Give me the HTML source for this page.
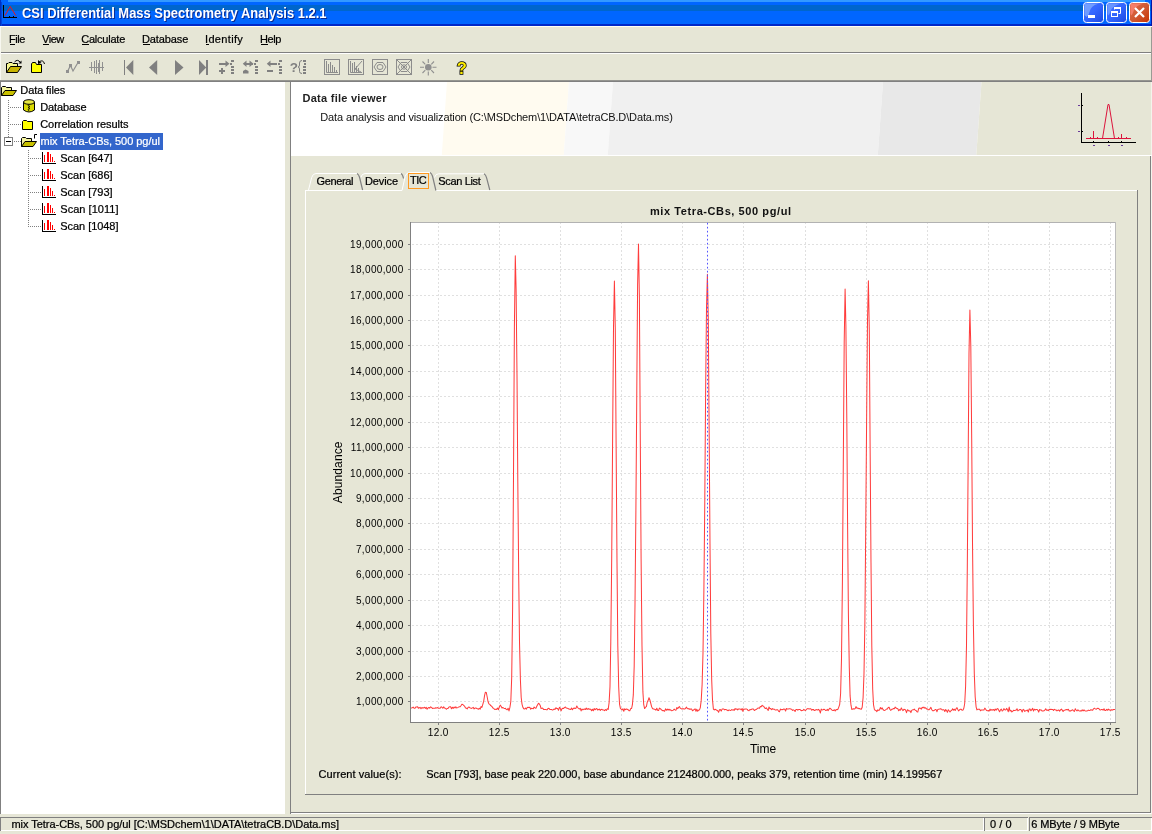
<!DOCTYPE html>
<html><head><meta charset="utf-8"><title>CSI Differential Mass Spectrometry Analysis 1.2.1</title>
<style>
html,body{margin:0;padding:0;background:#E6E6D6;overflow:hidden}
svg{display:block;font-family:"Liberation Sans",sans-serif;will-change:transform}
rect{shape-rendering:crispEdges}
text{white-space:pre}
.ui text, text.ui{stroke:#000;stroke-width:0.22px}
text.ui[fill='#fff']{stroke:#fff}
</style></head><body>
<svg width="1152" height="834" viewBox="0 0 1152 834">
<rect x="0" y="0" width="1152" height="834" fill="#E6E6D6" />
<rect x="0" y="0" width="1152" height="2" fill="#0066FF" />
<rect x="8" y="0" width="1137" height="2" fill="#3399FF" />
<rect x="0" y="2" width="1152" height="3" fill="#0066FF" />
<rect x="0" y="5" width="1152" height="6" fill="#0066CC" />
<rect x="0" y="11" width="1152" height="13" fill="#0066FF" />
<rect x="0" y="24" width="1152" height="2" fill="#0028C8" />
<rect x="0" y="0" width="1" height="26" fill="#0030C0" />
<rect x="1" y="2" width="1" height="24" fill="#0044DD" />
<rect x="1151" y="0" width="1" height="26" fill="#0018A8" />
<rect x="0" y="26" width="1152" height="1" fill="#FFFFF4" />
<g id="titleicons">
<!-- app icon -->
<rect x="3" y="5" width="1" height="13" fill="#000"/>
<rect x="3" y="17" width="14" height="1" fill="#000"/>
<path d="M5 15.5 L10.2 6.5 L15.8 15.5" fill="none" stroke="#e81818" stroke-width="1"/>
<rect x="9" y="16" width="1" height="1" fill="#000"/><rect x="13" y="16" width="1" height="1" fill="#000"/>
<!-- caption buttons -->
<defs>
<linearGradient id="gb" x1="0" y1="0" x2="1" y2="1"><stop offset="0" stop-color="#4a78ff"/><stop offset="0.5" stop-color="#3366ff"/><stop offset="1" stop-color="#1c48e0"/></linearGradient>
<linearGradient id="gr" x1="0" y1="0" x2="1" y2="1"><stop offset="0" stop-color="#e06848"/><stop offset="0.5" stop-color="#d05a34"/><stop offset="1" stop-color="#c83200"/></linearGradient>
</defs>
<rect x="1083.5" y="2.5" width="20" height="20" rx="3" fill="url(#gb)" stroke="#fff" stroke-width="1" style="shape-rendering:auto"/>
<rect x="1106.5" y="2.5" width="20" height="20" rx="3" fill="url(#gb)" stroke="#fff" stroke-width="1" style="shape-rendering:auto"/>
<rect x="1129.5" y="2.5" width="20" height="20" rx="3" fill="url(#gr)" stroke="#fff" stroke-width="1" style="shape-rendering:auto"/>
<path d="M1084.5 5 Q1084.5 3.500 1086 3.500 H1099 Q1090.500 5.500 1089.300 12.500 Q1088.800 15.500 1086.500 17 L1084.500 15 Z" fill="#7aa6ff" opacity="0.85"/>
<path d="M1107.500 5 Q1107.500 3.500 1109 3.500 H1121 Q1113 5.500 1111 10 Q1110 13.500 1108.500 15.500 L1107.500 14 Z" fill="#7aa6ff" opacity="0.7"/>
<path d="M1130.500 5 Q1130.500 3.500 1132 3.500 H1143 Q1136 5.500 1134 10 Q1133 13.500 1131.500 15.500 L1130.500 14 Z" fill="#ff8a7a" opacity="0.7"/>
<rect x="1088" y="15" width="7" height="3" fill="#fff"/>
<rect x="1111.5" y="11.5" width="6" height="5" fill="none" stroke="#fff" stroke-width="1"/><rect x="1111" y="11" width="7" height="2" fill="#fff"/>
<path d="M1114.5 9.500 V7.500 H1120.500 V13.500 H1118.500" fill="none" stroke="#fff" stroke-width="1"/><rect x="1114" y="7" width="7" height="2" fill="#fff"/>
<path d="M1135 8 L1144 17 M1144 8 L1135 17" stroke="#fff" stroke-width="2.2" fill="none"/>
</g>

<text x="23" y="19" font-size="14" font-weight="bold" fill="#0a2a90" textLength="304.5" lengthAdjust="spacingAndGlyphs">CSI Differential Mass Spectrometry Analysis 1.2.1</text>
<text x="22" y="18" font-size="14" font-weight="bold" fill="#fff" textLength="304.5" lengthAdjust="spacingAndGlyphs">CSI Differential Mass Spectrometry Analysis 1.2.1</text>
<text x="9.0" y="43" font-size="11" font-weight="normal" fill="#000" text-anchor="start" textLength="16.3" lengthAdjust="spacing" class="ui">File</text>
<text x="42.0" y="43" font-size="11" font-weight="normal" fill="#000" text-anchor="start" textLength="22.3" lengthAdjust="spacing" class="ui">View</text>
<text x="81.25" y="43" font-size="11" font-weight="normal" fill="#000" text-anchor="start" textLength="44.0" lengthAdjust="spacing" class="ui">Calculate</text>
<text x="142.0" y="43" font-size="11" font-weight="normal" fill="#000" text-anchor="start" textLength="46.3" lengthAdjust="spacing" class="ui">Database</text>
<text x="205.0" y="43" font-size="11" font-weight="normal" fill="#000" text-anchor="start" textLength="37.8" lengthAdjust="spacing" class="ui">Identify</text>
<text x="260.0" y="43" font-size="11" font-weight="normal" fill="#000" text-anchor="start" textLength="21.3" lengthAdjust="spacing" class="ui">Help</text>
<rect x="10" y="44" width="5" height="1" fill="#000" />
<rect x="43" y="44" width="6" height="1" fill="#000" />
<rect x="82" y="44" width="7" height="1" fill="#000" />
<rect x="143" y="44" width="7" height="1" fill="#000" />
<rect x="206" y="44" width="3" height="1" fill="#000" />
<rect x="261" y="44" width="7" height="1" fill="#000" />
<rect x="0" y="52" width="1152" height="1" fill="#808080" />
<rect x="0" y="53" width="1152" height="1" fill="#FFFFFF" />
<rect x="1151" y="27" width="1" height="55" fill="#9a9a94" />
<rect x="0" y="27" width="1" height="53" fill="#f8f8f0" />
<g id="toolbar">
<!-- open folder w/ arrow -->
<path d="M6.5 72.5 V63.5 H8 L9 62.5 H12 L13 63.5 H17.5 V66.5" fill="#f6f690" stroke="#000" stroke-width="1"/>
<path d="M6.5 72.5 L10.5 66.5 H21.5 L17.5 72.5 Z" fill="#c8b400" stroke="#000" stroke-width="1"/>
<path d="M14.5 62 Q17.5 58.5 20.5 62.5" fill="none" stroke="#000" stroke-width="1"/><path d="M21.5 60.5 V63.5 H18.5 Z" fill="#000"/>
<!-- closed folder w/ arrow -->
<path d="M31.5 72.500 V64 L32.500 62.500 H35.500 L36.500 64.500 H41.500 V72.500 Z" fill="#ffff00" stroke="#000" stroke-width="1"/>

<path d="M44.5 64 Q43.5 59.5 39.5 61.5" fill="none" stroke="#000" stroke-width="1"/><path d="M38 60 L38 64 L41.5 63 Z" fill="#000"/>
<!-- zigzag -->
<path d="M67.5 71.5 L70.5 65.5 L73 71 L78 62.500" fill="none" stroke="#909090" stroke-width="1.200"/>
<rect x="66" y="70" width="3" height="3" fill="#909090"/><rect x="69" y="64" width="3" height="3" fill="#909090"/><rect x="77" y="61" width="3" height="3" fill="#909090"/>
<!-- barcode -->
<g fill="#909090"><rect x="89" y="67" width="15" height="1"/><rect x="91" y="62" width="1" height="9"/><rect x="94" y="61" width="1" height="12"/><rect x="96" y="60" width="1" height="14"/><rect x="97.5" y="63" width="1" height="9" /><rect x="99" y="60" width="1" height="14"/><rect x="102" y="62" width="1" height="9"/></g>
<!-- nav arrows -->
<g fill="#808080" style="shape-rendering:auto">
<rect x="124" y="60" width="1.300" height="15"/><path d="M126 67.500 L133.300 60 V75 Z"/>
<path d="M149 67.500 L157.200 60 V75 Z"/>
<path d="M183.500 67.500 L175 60 V75 Z"/>
<path d="M206.200 67.500 L199 60 V75 Z"/><rect x="206.200" y="60" width="1.300" height="15"/>
</g>
<!-- arrow+ dotted -->
<g fill="#808080">
<rect x="219" y="63" width="9" height="2"/><path d="M225.500 60.500 L229.500 63.800 L225.500 67 Z" style="shape-rendering:auto"/>
<rect x="219" y="70" width="6" height="2"/><rect x="221" y="68" width="2" height="6"/>
<rect x="231" y="60" width="3" height="2"/><rect x="230" y="63" width="2" height="2"/><rect x="231" y="66" width="3" height="2"/><rect x="231" y="69" width="3" height="2"/><rect x="231" y="72" width="3" height="2"/>
<!-- arrows both + house -->
<rect x="244" y="63" width="9" height="2"/><path d="M246.500 60.500 L242.800 63.800 L246.500 67 Z" style="shape-rendering:auto"/><path d="M249.500 60.500 L253.500 63.800 L249.500 67 Z" style="shape-rendering:auto"/>
<path d="M243 73.500 V71 L245.500 69.500 L248.500 71 V73.500 Z" style="shape-rendering:auto"/>
<rect x="255" y="60" width="3" height="2"/><rect x="254" y="63" width="2" height="2"/><rect x="255" y="66" width="3" height="2"/><rect x="255" y="69" width="3" height="2"/><rect x="255" y="72" width="3" height="2"/>
<!-- arrow left + minus -->
<rect x="268" y="63" width="9" height="2"/><path d="M270.500 60.500 L266.800 63.800 L270.500 67 Z" style="shape-rendering:auto"/>
<rect x="267" y="70" width="6" height="2"/>
<rect x="279" y="60" width="3" height="2"/><rect x="278" y="63" width="2" height="2"/><rect x="279" y="66" width="3" height="2"/><rect x="279" y="69" width="3" height="2"/><rect x="279" y="72" width="3" height="2"/>
<!-- ?{ dotted -->
<rect x="303" y="60" width="3" height="2"/><rect x="304" y="63" width="2" height="2"/><rect x="303" y="66" width="3" height="2"/><rect x="303" y="69" width="3" height="2"/><rect x="303" y="72" width="3" height="2"/>
</g>
<text x="289.800" y="72.200" font-size="13.500" font-weight="bold" fill="#808080">?</text>
<path d="M302 60.500 Q299.500 60.500 299.500 63 V65 Q299.500 67 298 67 Q299.500 67 299.500 69 V71.500 Q299.500 73.500 302 73.500" fill="none" stroke="#808080" stroke-width="1"/>
<!-- boxed icons -->
<g fill="none" stroke="#8c8c8c" stroke-width="1">
<rect x="324.500" y="59.500" width="15" height="15"/><rect x="348.500" y="59.500" width="15" height="15"/><rect x="372.500" y="59.500" width="15" height="15"/><rect x="396.500" y="59.500" width="15" height="15"/>
<path d="M326.500 61 V72.500 H338"/><path d="M328.500 72 V64 M330.500 72 V62 M332.500 72 V65 M334.500 72 V67 M336.500 72 V70"/>
<path d="M350.500 61 V72.500 H362"/><path d="M352.500 72 V63 M354.500 72 V62 M356.500 72 V66 M358.500 72 V68"/><path d="M362 61 L355 69 L361 72" style="shape-rendering:auto"/>
<path d="M374 67 L377 62.500 H383 L386 67 L383 71.500 H377 Z" style="shape-rendering:auto"/><ellipse cx="380" cy="67" rx="3" ry="2.500" style="shape-rendering:auto"/>
<path d="M397 60 L411 74 M411 60 L397 74" style="shape-rendering:auto"/><path d="M398 67 L401 62.500 H407 L410 67 L407 71.500 H401 Z" style="shape-rendering:auto"/><ellipse cx="404" cy="67" rx="2.500" ry="2.200" style="shape-rendering:auto"/>
</g>
<!-- sun -->
<circle cx="428.300" cy="67.200" r="3.300" fill="#909090"/>
<path d="M428.300 59 V63 M428.300 71.500 V75.500 M420 67.200 H424 M432.500 67.200 H436.500 M422.500 61.500 L425.300 64.300 M431.300 70.200 L434 73 M434 61.500 L431.300 64.300 M425.300 70.200 L422.500 73" stroke="#909090" stroke-width="1.100" fill="none"/>
<!-- yellow ? -->
<text x="456.800" y="73.700" font-size="16.5" font-weight="bold" fill="#ffee00" stroke="#000" stroke-width="1.500" paint-order="stroke" style="paint-order:stroke">?</text>
</g>

<rect x="0" y="80" width="1152" height="1" fill="#959590" />
<rect x="0" y="81" width="1152" height="1" fill="#808080" />
<rect x="1" y="82" width="284" height="732" fill="#fff" />
<rect x="0" y="82" width="1" height="732" fill="#808080" />
<g id="tree">
<defs><pattern id="dv" width="1" height="2" patternUnits="userSpaceOnUse"><rect x="0" y="0" width="1" height="1" fill="#808080"/></pattern><pattern id="dh" width="2" height="1" patternUnits="userSpaceOnUse"><rect x="0" y="0" width="1" height="1" fill="#808080"/></pattern></defs>
<rect x="8" y="100" width="1" height="37" fill="url(#dv)"/>
<rect x="10" y="107" width="12" height="1" fill="url(#dh)"/>
<rect x="10" y="124" width="12" height="1" fill="url(#dh)"/>
<rect x="14" y="141" width="8" height="1" fill="url(#dh)"/>
<rect x="28" y="150" width="1" height="77" fill="url(#dv)"/>
<rect x="30" y="158" width="12" height="1" fill="url(#dh)"/>
<rect x="30" y="175" width="12" height="1" fill="url(#dh)"/>
<rect x="30" y="192" width="12" height="1" fill="url(#dh)"/>
<rect x="30" y="209" width="12" height="1" fill="url(#dh)"/>
<rect x="30" y="226" width="12" height="1" fill="url(#dh)"/>
<path d="M1.5 95.5 V87.5 L2.5 86.5 H5.5 L6.5 87.5 H11.5 V90.5" fill="#f4f4a0" stroke="#000" stroke-width="1"/>
<path d="M1.5 95.5 L5 90.5 H16.5 L13 95.5 Z" fill="#c8c000" stroke="#000" stroke-width="1"/>
<path d="M21.5 146.5 V138.5 L22.5 137.5 H25.5 L26.5 138.5 H31.5 V141.5" fill="#f4f4a0" stroke="#000" stroke-width="1"/>
<path d="M21.5 146.5 L25 141.5 H36.5 L33 146.5 Z" fill="#c8c000" stroke="#000" stroke-width="1"/>
<path d="M34.500 138.500 V134.500 H37" fill="none" stroke="#000" stroke-width="1"/>
<path d="M23.500 102 V110 Q29 114 34.500 110 V102" fill="#d8d800" stroke="#000" stroke-width="1"/>
<ellipse cx="29" cy="102" rx="5.500" ry="2.300" fill="#e8e840" stroke="#000" stroke-width="1"/>
<path d="M29 104.500 L28 105.500 L30 106.500 L28 107.500 L30 108.500 L28 109.500 L29 111" fill="none" stroke="#000" stroke-width="0.800"/>
<path d="M22.500 129.500 V121.500 L23.500 120.500 H26.500 L27.500 121.500 H32.500 V129.500 Z" fill="#ffff00" stroke="#000" stroke-width="1"/>
<rect x="4.500" y="137.500" width="8" height="8" fill="#fff" stroke="#808080" stroke-width="1"/><rect x="6" y="141" width="5" height="1" fill="#000"/>
<rect x="40" y="133" width="123" height="17" fill="#3366CC"/>
<rect x="42" y="152" width="1" height="12" fill="#000"/><rect x="42" y="163" width="14" height="1" fill="#000"/>
<g fill="#ff0000"><rect x="44" y="155" width="1" height="7"/><rect x="47" y="152" width="2" height="10"/><rect x="50" y="154" width="1" height="8"/><rect x="52" y="157" width="1" height="5"/><rect x="54" y="161" width="1" height="1"/></g>
<rect x="42" y="169" width="1" height="12" fill="#000"/><rect x="42" y="180" width="14" height="1" fill="#000"/>
<g fill="#ff0000"><rect x="44" y="172" width="1" height="7"/><rect x="47" y="169" width="2" height="10"/><rect x="50" y="171" width="1" height="8"/><rect x="52" y="174" width="1" height="5"/><rect x="54" y="178" width="1" height="1"/></g>
<rect x="42" y="186" width="1" height="12" fill="#000"/><rect x="42" y="197" width="14" height="1" fill="#000"/>
<g fill="#ff0000"><rect x="44" y="189" width="1" height="7"/><rect x="47" y="186" width="2" height="10"/><rect x="50" y="188" width="1" height="8"/><rect x="52" y="191" width="1" height="5"/><rect x="54" y="195" width="1" height="1"/></g>
<rect x="42" y="203" width="1" height="12" fill="#000"/><rect x="42" y="214" width="14" height="1" fill="#000"/>
<g fill="#ff0000"><rect x="44" y="206" width="1" height="7"/><rect x="47" y="203" width="2" height="10"/><rect x="50" y="205" width="1" height="8"/><rect x="52" y="208" width="1" height="5"/><rect x="54" y="212" width="1" height="1"/></g>
<rect x="42" y="220" width="1" height="12" fill="#000"/><rect x="42" y="231" width="14" height="1" fill="#000"/>
<g fill="#ff0000"><rect x="44" y="223" width="1" height="7"/><rect x="47" y="220" width="2" height="10"/><rect x="50" y="222" width="1" height="8"/><rect x="52" y="225" width="1" height="5"/><rect x="54" y="229" width="1" height="1"/></g>
<text class="ui" x="20.3" y="94" font-size="11" fill="#000" textLength="45" lengthAdjust="spacing">Data files</text>
<text class="ui" x="40.2" y="111" font-size="11" fill="#000" textLength="46.3" lengthAdjust="spacing">Database</text>
<text class="ui" x="40.2" y="128" font-size="11" fill="#000" textLength="88.3" lengthAdjust="spacing">Correlation results</text>
<text class="ui" x="40.5" y="145" font-size="11" fill="#fff" textLength="119.5" lengthAdjust="spacing">mix Tetra-CBs, 500 pg/ul</text>
<text class="ui" x="60.3" y="162" font-size="11" fill="#000" textLength="52.3" lengthAdjust="spacing">Scan [647]</text>
<text class="ui" x="60.3" y="179" font-size="11" fill="#000" textLength="52.3" lengthAdjust="spacing">Scan [686]</text>
<text class="ui" x="60.3" y="196" font-size="11" fill="#000" textLength="52.3" lengthAdjust="spacing">Scan [793]</text>
<text class="ui" x="60.3" y="213" font-size="11" fill="#000" textLength="58.2" lengthAdjust="spacing">Scan [1011]</text>
<text class="ui" x="60.3" y="230" font-size="11" fill="#000" textLength="58.2" lengthAdjust="spacing">Scan [1048]</text>
</g>
<rect x="290" y="82" width="1" height="732" fill="#808080" />
<rect x="290" y="812" width="861" height="1" fill="#808080" />
<rect x="291" y="813" width="860" height="1" fill="#fff" />
<rect x="1150" y="155" width="1" height="658" fill="#808080" />
<rect x="1151" y="82" width="1" height="732" fill="#f4f4ec" />
<g>
<rect x="291" y="82" width="860" height="73" fill="#fff" />
<polygon points="447,82 569,82 563.8,155 441.8,155" fill="#FFFBF0" shape-rendering="auto"/>
<polygon points="569,82 613,82 607.8,155 563.8,155" fill="#F8F8F8" shape-rendering="auto"/>
<polygon points="613,82 883,82 877.8,155 607.8,155" fill="#F0F0F0" shape-rendering="auto"/>
<polygon points="883,82 981.5,82 976.3,155 877.8,155" fill="#E8E8E8" shape-rendering="auto"/>
<polygon points="981.5,82 1151,82 1151,155 976.3,155" fill="#E6E6D6"/>
</g>
<text x="302.5" y="102" font-size="11" font-weight="bold" fill="#222" text-anchor="start" textLength="84" lengthAdjust="spacing" >Data file viewer</text>
<text x="320.3" y="120.5" font-size="11" font-weight="normal" fill="#111" text-anchor="start" textLength="352.5" lengthAdjust="spacing" >Data analysis and visualization (C:\MSDchem\1\DATA\tetraCB.D\Data.ms)</text>
<rect x="291" y="155" width="861" height="1" fill="#fff" />
<g id="hicon">
<rect x="1081" y="93" width="1" height="50" fill="#000"/><rect x="1081" y="142" width="55" height="1" fill="#000"/>
<rect x="1093" y="141" width="1" height="1" fill="#000"/><rect x="1093" y="145" width="2" height="1" fill="#6a3a9a"/>
<rect x="1108" y="141" width="1" height="1" fill="#000"/><rect x="1108" y="145" width="2" height="1" fill="#6a3a9a"/>
<rect x="1121" y="141" width="1" height="1" fill="#000"/><rect x="1121" y="145" width="2" height="1" fill="#6a3a9a"/>
<rect x="1078" y="105" width="2" height="1" fill="#6a3a9a"/><rect x="1082" y="105" width="1" height="1" fill="#000"/>
<rect x="1078" y="131" width="2" height="1" fill="#6a3a9a"/><rect x="1082" y="131" width="1" height="1" fill="#000"/>
<path d="M1086 138.500 H1102.500 L1108 104.500 H1109 L1114.500 138.500 H1131 M1102 138.500 H1115" fill="none" stroke="#dc143c" stroke-width="1" stroke-linejoin="round"/>
<g fill="#dc143c"><rect x="1093" y="131" width="1" height="7"/><rect x="1121" y="134" width="1" height="4"/><rect x="1090" y="137" width="1" height="1"/><rect x="1097" y="137" width="1" height="1"/><rect x="1118" y="137" width="1" height="1"/><rect x="1126" y="137" width="1" height="1"/></g>
</g>
<g id="tabs" fill="none" stroke-width="1">
<rect x="305" y="190" width="97" height="1" fill="#fff"/><rect x="436" y="190" width="702" height="1" fill="#fff"/>
<rect x="305" y="190" width="1" height="605" fill="#fff"/>
<rect x="1137" y="190" width="1" height="605" fill="#808080"/><rect x="305" y="794" width="833" height="1" fill="#808080"/>
<path d="M308.500 190 L311.700 177.500 Q312.800 173.500 316 173.500 H357" stroke="#fff"/>
<path d="M360.800 177.500 Q361.900 173.500 365 173.500 H401" stroke="#fff"/>
<path d="M357 173.500 Q358.800 174.500 359.600 177.500 L362.600 190" stroke="#808080" stroke-width="1.2"/>
<path d="M401 173.500 Q402.800 174.500 403.500 178.500" stroke="#808080" stroke-width="1.2"/>
<path d="M434.500 177.500 Q435.600 173.800 438.500 173.800 H484" stroke="#fff"/>
<path d="M484 173.800 Q485.800 174.800 486.600 177.800 L489.800 190" stroke="#808080" stroke-width="1.2"/>
<path d="M402 190.500 L405.200 176.500 Q406.300 172.500 409.500 172.500 H430" stroke="#fff"/>
<path d="M430 172.500 Q431.800 173.500 432.600 176.500 L435.900 190.500" stroke="#808080" stroke-width="1.2"/>
<rect x="408.500" y="173.500" width="20" height="15" stroke="#ff9920" style="shape-rendering:auto"/>
</g>
<text class="ui" x="316.5" y="185" font-size="11" fill="#000" textLength="37" lengthAdjust="spacing">General</text>
<text class="ui" x="365" y="185" font-size="11" fill="#000" textLength="33" lengthAdjust="spacing">Device</text>
<text class="ui" x="410" y="184" font-size="11" fill="#000" textLength="16.8" lengthAdjust="spacing">TIC</text>
<text class="ui" x="438.3" y="185" font-size="11" fill="#000" textLength="42.5" lengthAdjust="spacing">Scan List</text>
<g id="chart">
<text x="720.5" y="215" font-size="11" font-weight="bold" fill="#111" text-anchor="middle" textLength="141" lengthAdjust="spacing" >mix Tetra-CBs, 500 pg/ul</text>
<rect x="411" y="223" width="704" height="499" fill="#fff" />
<g stroke="#e0e0e0" stroke-width="1" stroke-dasharray="2 2" shape-rendering="crispEdges">
<line x1="438.5" y1="223" x2="438.5" y2="722" stroke-dashoffset="1"/>
<line x1="499.5" y1="223" x2="499.5" y2="722" stroke-dashoffset="1"/>
<line x1="560.5" y1="223" x2="560.5" y2="722" stroke-dashoffset="1"/>
<line x1="621.5" y1="223" x2="621.5" y2="722" stroke-dashoffset="1"/>
<line x1="682.5" y1="223" x2="682.5" y2="722" stroke-dashoffset="1"/>
<line x1="743.5" y1="223" x2="743.5" y2="722" stroke-dashoffset="1"/>
<line x1="805.5" y1="223" x2="805.5" y2="722" stroke-dashoffset="1"/>
<line x1="866.5" y1="223" x2="866.5" y2="722" stroke-dashoffset="1"/>
<line x1="927.5" y1="223" x2="927.5" y2="722" stroke-dashoffset="1"/>
<line x1="988.5" y1="223" x2="988.5" y2="722" stroke-dashoffset="1"/>
<line x1="1049.5" y1="223" x2="1049.5" y2="722" stroke-dashoffset="1"/>
<line x1="1110.5" y1="223" x2="1110.5" y2="722" stroke-dashoffset="1"/>
<line x1="411" y1="701.5" x2="1115" y2="701.5" stroke-dashoffset="3"/>
<line x1="411" y1="676.5" x2="1115" y2="676.5" stroke-dashoffset="3"/>
<line x1="411" y1="651.5" x2="1115" y2="651.5" stroke-dashoffset="3"/>
<line x1="411" y1="625.5" x2="1115" y2="625.5" stroke-dashoffset="3"/>
<line x1="411" y1="600.5" x2="1115" y2="600.5" stroke-dashoffset="3"/>
<line x1="411" y1="574.5" x2="1115" y2="574.5" stroke-dashoffset="3"/>
<line x1="411" y1="549.5" x2="1115" y2="549.5" stroke-dashoffset="3"/>
<line x1="411" y1="523.5" x2="1115" y2="523.5" stroke-dashoffset="3"/>
<line x1="411" y1="498.5" x2="1115" y2="498.5" stroke-dashoffset="3"/>
<line x1="411" y1="473.5" x2="1115" y2="473.5" stroke-dashoffset="3"/>
<line x1="411" y1="447.5" x2="1115" y2="447.5" stroke-dashoffset="3"/>
<line x1="411" y1="422.5" x2="1115" y2="422.5" stroke-dashoffset="3"/>
<line x1="411" y1="396.5" x2="1115" y2="396.5" stroke-dashoffset="3"/>
<line x1="411" y1="371.5" x2="1115" y2="371.5" stroke-dashoffset="3"/>
<line x1="411" y1="345.5" x2="1115" y2="345.5" stroke-dashoffset="3"/>
<line x1="411" y1="320.5" x2="1115" y2="320.5" stroke-dashoffset="3"/>
<line x1="411" y1="295.5" x2="1115" y2="295.5" stroke-dashoffset="3"/>
<line x1="411" y1="269.5" x2="1115" y2="269.5" stroke-dashoffset="3"/>
<line x1="411" y1="244.5" x2="1115" y2="244.5" stroke-dashoffset="3"/>
</g>
<rect x="410" y="222" width="706" height="1" fill="#b2b2b2" />
<rect x="1115" y="222" width="1" height="501" fill="#bcbcbc" />
<rect x="410" y="222" width="1" height="501" fill="#808080" />
<rect x="410" y="722" width="706" height="1" fill="#808080" />
<rect x="408" y="701" width="2" height="1" fill="#808080" />
<text x="403.6" y="705.1" font-size="10" font-weight="normal" fill="#000" text-anchor="end" letter-spacing="0.35">1,000,000</text>
<rect x="408" y="676" width="2" height="1" fill="#808080" />
<text x="403.6" y="680.1" font-size="10" font-weight="normal" fill="#000" text-anchor="end" letter-spacing="0.35">2,000,000</text>
<rect x="408" y="651" width="2" height="1" fill="#808080" />
<text x="403.6" y="655.1" font-size="10" font-weight="normal" fill="#000" text-anchor="end" letter-spacing="0.35">3,000,000</text>
<rect x="408" y="625" width="2" height="1" fill="#808080" />
<text x="403.6" y="629.1" font-size="10" font-weight="normal" fill="#000" text-anchor="end" letter-spacing="0.35">4,000,000</text>
<rect x="408" y="600" width="2" height="1" fill="#808080" />
<text x="403.6" y="604.1" font-size="10" font-weight="normal" fill="#000" text-anchor="end" letter-spacing="0.35">5,000,000</text>
<rect x="408" y="574" width="2" height="1" fill="#808080" />
<text x="403.6" y="578.1" font-size="10" font-weight="normal" fill="#000" text-anchor="end" letter-spacing="0.35">6,000,000</text>
<rect x="408" y="549" width="2" height="1" fill="#808080" />
<text x="403.6" y="553.1" font-size="10" font-weight="normal" fill="#000" text-anchor="end" letter-spacing="0.35">7,000,000</text>
<rect x="408" y="523" width="2" height="1" fill="#808080" />
<text x="403.6" y="527.1" font-size="10" font-weight="normal" fill="#000" text-anchor="end" letter-spacing="0.35">8,000,000</text>
<rect x="408" y="498" width="2" height="1" fill="#808080" />
<text x="403.6" y="502.1" font-size="10" font-weight="normal" fill="#000" text-anchor="end" letter-spacing="0.35">9,000,000</text>
<rect x="408" y="473" width="2" height="1" fill="#808080" />
<text x="403.6" y="477.1" font-size="10" font-weight="normal" fill="#000" text-anchor="end" letter-spacing="0.35">10,000,000</text>
<rect x="408" y="447" width="2" height="1" fill="#808080" />
<text x="403.6" y="451.1" font-size="10" font-weight="normal" fill="#000" text-anchor="end" letter-spacing="0.35">11,000,000</text>
<rect x="408" y="422" width="2" height="1" fill="#808080" />
<text x="403.6" y="426.1" font-size="10" font-weight="normal" fill="#000" text-anchor="end" letter-spacing="0.35">12,000,000</text>
<rect x="408" y="396" width="2" height="1" fill="#808080" />
<text x="403.6" y="400.1" font-size="10" font-weight="normal" fill="#000" text-anchor="end" letter-spacing="0.35">13,000,000</text>
<rect x="408" y="371" width="2" height="1" fill="#808080" />
<text x="403.6" y="375.1" font-size="10" font-weight="normal" fill="#000" text-anchor="end" letter-spacing="0.35">14,000,000</text>
<rect x="408" y="345" width="2" height="1" fill="#808080" />
<text x="403.6" y="349.1" font-size="10" font-weight="normal" fill="#000" text-anchor="end" letter-spacing="0.35">15,000,000</text>
<rect x="408" y="320" width="2" height="1" fill="#808080" />
<text x="403.6" y="324.1" font-size="10" font-weight="normal" fill="#000" text-anchor="end" letter-spacing="0.35">16,000,000</text>
<rect x="408" y="295" width="2" height="1" fill="#808080" />
<text x="403.6" y="299.1" font-size="10" font-weight="normal" fill="#000" text-anchor="end" letter-spacing="0.35">17,000,000</text>
<rect x="408" y="269" width="2" height="1" fill="#808080" />
<text x="403.6" y="273.1" font-size="10" font-weight="normal" fill="#000" text-anchor="end" letter-spacing="0.35">18,000,000</text>
<rect x="408" y="244" width="2" height="1" fill="#808080" />
<text x="403.6" y="248.1" font-size="10" font-weight="normal" fill="#000" text-anchor="end" letter-spacing="0.35">19,000,000</text>
<rect x="438" y="723" width="1" height="2" fill="#808080" />
<text x="438.3" y="736.2" font-size="10" font-weight="normal" fill="#000" text-anchor="middle" letter-spacing="0.35">12.0</text>
<rect x="499" y="723" width="1" height="2" fill="#808080" />
<text x="499.3" y="736.2" font-size="10" font-weight="normal" fill="#000" text-anchor="middle" letter-spacing="0.35">12.5</text>
<rect x="560" y="723" width="1" height="2" fill="#808080" />
<text x="560.3" y="736.2" font-size="10" font-weight="normal" fill="#000" text-anchor="middle" letter-spacing="0.35">13.0</text>
<rect x="621" y="723" width="1" height="2" fill="#808080" />
<text x="621.3" y="736.2" font-size="10" font-weight="normal" fill="#000" text-anchor="middle" letter-spacing="0.35">13.5</text>
<rect x="682" y="723" width="1" height="2" fill="#808080" />
<text x="682.3" y="736.2" font-size="10" font-weight="normal" fill="#000" text-anchor="middle" letter-spacing="0.35">14.0</text>
<rect x="743" y="723" width="1" height="2" fill="#808080" />
<text x="743.3" y="736.2" font-size="10" font-weight="normal" fill="#000" text-anchor="middle" letter-spacing="0.35">14.5</text>
<rect x="805" y="723" width="1" height="2" fill="#808080" />
<text x="805.3" y="736.2" font-size="10" font-weight="normal" fill="#000" text-anchor="middle" letter-spacing="0.35">15.0</text>
<rect x="866" y="723" width="1" height="2" fill="#808080" />
<text x="866.3" y="736.2" font-size="10" font-weight="normal" fill="#000" text-anchor="middle" letter-spacing="0.35">15.5</text>
<rect x="927" y="723" width="1" height="2" fill="#808080" />
<text x="927.3" y="736.2" font-size="10" font-weight="normal" fill="#000" text-anchor="middle" letter-spacing="0.35">16.0</text>
<rect x="988" y="723" width="1" height="2" fill="#808080" />
<text x="988.3" y="736.2" font-size="10" font-weight="normal" fill="#000" text-anchor="middle" letter-spacing="0.35">16.5</text>
<rect x="1049" y="723" width="1" height="2" fill="#808080" />
<text x="1049.3" y="736.2" font-size="10" font-weight="normal" fill="#000" text-anchor="middle" letter-spacing="0.35">17.0</text>
<rect x="1110" y="723" width="1" height="2" fill="#808080" />
<text x="1110.3" y="736.2" font-size="10" font-weight="normal" fill="#000" text-anchor="middle" letter-spacing="0.35">17.5</text>
<text x="763" y="753" font-size="12" font-weight="normal" fill="#000" text-anchor="middle" >Time</text>
<text transform="translate(342.3,472.3) rotate(-90)" font-size="12" text-anchor="middle" fill="#000" letter-spacing="0.12">Abundance</text>
<clipPath id="pc"><rect x="411" y="223" width="704" height="499"/></clipPath>
<path d="M410.6 708.0 L411.5 707.9 L412.3 707.7 L413.2 707.1 L414.1 708.2 L415.0 708.3 L415.8 707.0 L416.7 706.9 L417.6 706.7 L418.4 708.3 L419.3 707.8 L420.2 707.4 L421.0 708.8 L421.9 707.5 L422.8 708.2 L423.7 707.8 L424.5 707.2 L425.4 708.4 L426.3 707.4 L427.1 709.2 L428.0 708.0 L428.9 707.4 L429.7 708.1 L430.6 706.8 L431.5 707.4 L432.4 708.4 L433.2 708.2 L434.1 708.2 L435.0 708.3 L435.8 707.8 L436.7 708.1 L437.6 707.5 L438.4 708.3 L439.3 708.3 L440.2 708.2 L441.1 706.8 L441.9 707.2 L442.8 708.3 L443.7 706.9 L444.5 708.1 L445.4 708.2 L446.3 709.3 L447.1 708.5 L448.0 708.6 L448.9 707.1 L449.8 706.7 L450.6 706.8 L451.5 708.8 L452.4 707.3 L453.2 708.4 L454.1 707.0 L455.0 708.0 L455.8 706.7 L456.7 708.0 L457.6 707.6 L458.5 707.1 L459.3 706.7 L460.2 706.7 L461.1 705.5 L461.9 704.2 L462.8 704.5 L463.7 705.4 L464.5 706.1 L465.4 707.7 L466.3 708.2 L467.2 708.9 L468.0 707.4 L468.9 707.0 L469.8 707.7 L470.6 708.1 L471.5 708.4 L472.4 707.9 L473.2 707.3 L474.1 708.9 L475.0 708.1 L475.9 708.0 L476.7 708.5 L477.6 708.8 L478.5 709.3 L479.3 708.2 L480.2 709.2 L481.1 706.5 L481.9 707.4 L482.8 704.3 L483.7 701.2 L484.6 695.4 L485.4 692.2 L486.3 692.4 L487.2 697.0 L488.0 701.5 L488.9 703.9 L489.8 704.4 L490.6 705.5 L491.5 706.2 L492.4 707.1 L493.3 708.4 L494.1 708.8 L495.0 709.6 L495.9 709.1 L496.7 709.4 L497.6 708.1 L498.5 709.7 L499.3 707.0 L500.2 705.1 L501.1 706.3 L502.0 708.0 L502.8 707.4 L503.7 708.1 L504.6 708.6 L505.4 708.2 L506.3 709.5 L507.2 709.7 L508.1 708.2 L509.0 710.9 L509.9 707.4 L510.8 701.7 L511.7 677.4 L512.6 609.2 L513.5 476.3 L514.4 326.7 L515.3 255.8 L516.1 289.0 L517.0 375.0 L517.8 481.5 L518.7 575.4 L519.5 642.0 L520.4 679.7 L521.2 697.5 L522.0 704.1 L522.9 707.3 L523.7 708.8 L524.6 709.0 L525.4 708.0 L526.3 709.2 L527.2 707.5 L528.1 707.2 L528.9 707.4 L529.8 707.3 L530.7 709.2 L531.5 708.2 L532.4 708.6 L533.3 708.8 L534.1 707.0 L535.0 707.9 L535.9 708.2 L536.8 706.2 L537.6 704.7 L538.5 703.3 L539.4 704.0 L540.2 705.5 L541.1 708.6 L542.0 708.1 L542.8 708.2 L543.7 709.6 L544.6 709.4 L545.5 709.4 L546.3 709.8 L547.2 709.7 L548.1 708.4 L548.9 708.2 L549.8 709.4 L550.7 709.6 L551.5 709.4 L552.4 710.1 L553.3 709.7 L554.2 709.0 L555.0 709.5 L555.9 707.7 L556.8 708.6 L557.6 708.5 L558.5 710.3 L559.4 707.3 L560.2 708.1 L561.1 710.8 L562.0 708.8 L562.9 708.3 L563.7 708.4 L564.6 707.4 L565.5 707.0 L566.3 708.1 L567.2 708.3 L568.1 708.5 L568.9 709.1 L569.8 709.3 L570.7 709.5 L571.6 708.0 L572.4 709.8 L573.3 708.5 L574.2 708.0 L575.0 708.5 L575.9 708.3 L576.8 706.0 L577.6 707.5 L578.5 708.4 L579.4 709.0 L580.3 708.4 L581.1 710.9 L582.0 709.0 L582.9 709.9 L583.7 709.2 L584.6 709.0 L585.5 709.5 L586.3 708.1 L587.2 709.5 L588.1 708.5 L589.0 709.3 L589.8 709.1 L590.7 709.2 L591.6 710.7 L592.4 709.2 L593.3 710.7 L594.2 708.5 L595.0 709.8 L595.9 709.0 L596.8 708.5 L597.7 710.1 L598.5 709.5 L599.4 709.1 L600.3 710.5 L601.1 709.4 L602.0 709.3 L602.9 710.1 L603.7 709.9 L604.6 710.6 L605.5 709.5 L606.4 710.4 L607.3 708.7 L608.2 709.4 L609.1 702.6 L610.0 686.5 L610.8 641.7 L611.7 558.8 L612.6 440.6 L613.5 327.8 L614.4 281.0 L615.3 329.3 L616.1 443.2 L617.0 562.2 L617.8 645.8 L618.7 686.9 L619.5 703.8 L620.4 708.4 L621.2 709.1 L622.1 710.0 L622.9 708.7 L623.8 711.3 L624.6 708.8 L625.5 709.7 L626.4 708.9 L627.2 709.2 L628.1 709.7 L629.0 710.7 L629.8 710.7 L630.7 708.6 L631.6 708.5 L632.4 704.7 L633.3 694.9 L634.2 665.7 L635.0 604.2 L635.9 510.2 L636.8 390.7 L637.6 285.1 L638.5 244.0 L639.4 297.8 L640.2 426.1 L641.1 558.9 L642.0 646.1 L642.9 691.9 L643.7 704.3 L644.6 708.6 L645.5 707.2 L646.4 706.6 L647.2 702.3 L648.1 700.6 L649.0 697.7 L649.9 700.0 L650.7 703.0 L651.6 706.6 L652.5 708.5 L653.3 709.0 L654.2 709.1 L655.1 709.5 L655.9 710.2 L656.8 708.3 L657.7 710.4 L658.6 710.5 L659.4 708.1 L660.3 708.7 L661.2 709.5 L662.0 710.3 L662.9 710.8 L663.8 710.6 L664.6 711.3 L665.5 708.8 L666.4 710.2 L667.3 709.1 L668.1 710.1 L669.0 709.2 L669.9 710.2 L670.7 709.7 L671.6 710.8 L672.5 710.5 L673.3 710.1 L674.2 709.1 L675.1 710.0 L676.0 710.2 L676.8 707.6 L677.7 708.6 L678.6 707.4 L679.4 706.6 L680.3 708.2 L681.2 708.6 L682.0 709.2 L682.9 708.6 L683.8 708.9 L684.7 708.9 L685.5 708.6 L686.4 707.1 L687.3 708.5 L688.1 708.9 L689.0 708.6 L689.9 709.5 L690.7 708.9 L691.6 709.0 L692.5 710.8 L693.4 710.1 L694.2 709.5 L695.1 708.9 L696.0 711.3 L696.8 709.2 L697.7 711.2 L698.6 710.2 L699.5 709.8 L700.3 707.6 L701.2 700.4 L702.1 684.9 L703.0 653.1 L703.9 589.4 L704.8 499.9 L705.6 394.1 L706.5 308.2 L707.4 274.3 L708.3 319.3 L709.1 425.9 L710.0 544.1 L710.8 633.5 L711.7 680.0 L712.5 699.9 L713.4 709.1 L714.3 710.0 L715.1 709.2 L716.0 709.7 L716.8 710.3 L717.7 710.8 L718.6 712.2 L719.5 709.8 L720.3 709.6 L721.2 711.1 L722.1 709.1 L722.9 709.0 L723.8 709.1 L724.7 709.9 L725.5 709.4 L726.4 709.8 L727.3 710.2 L728.2 710.7 L729.0 709.9 L729.9 710.3 L730.8 710.5 L731.6 709.6 L732.5 710.0 L733.4 709.7 L734.2 710.4 L735.1 708.5 L736.0 709.4 L736.9 708.9 L737.7 709.9 L738.6 708.9 L739.5 709.0 L740.3 709.0 L741.2 709.9 L742.1 708.5 L742.9 711.4 L743.8 708.9 L744.7 709.2 L745.6 709.0 L746.4 709.0 L747.3 709.4 L748.2 710.6 L749.0 710.7 L749.9 709.5 L750.8 709.7 L751.6 709.3 L752.5 708.9 L753.4 709.0 L754.3 710.5 L755.1 709.9 L756.0 709.6 L756.9 709.0 L757.7 708.2 L758.6 707.9 L759.5 708.3 L760.3 706.5 L761.2 706.8 L762.1 705.3 L763.0 706.0 L763.8 706.4 L764.7 708.0 L765.6 708.5 L766.4 707.9 L767.3 709.2 L768.2 710.5 L769.0 706.9 L769.9 708.7 L770.8 708.6 L771.7 709.7 L772.5 708.6 L773.4 709.2 L774.3 709.2 L775.1 710.0 L776.0 709.9 L776.9 709.7 L777.7 709.8 L778.6 711.2 L779.5 711.7 L780.4 709.1 L781.2 709.8 L782.1 709.4 L783.0 709.7 L783.8 708.9 L784.7 709.3 L785.6 711.0 L786.4 708.5 L787.3 709.1 L788.2 708.9 L789.1 708.8 L789.9 708.8 L790.8 709.1 L791.7 709.3 L792.5 710.4 L793.4 709.8 L794.3 710.4 L795.1 711.5 L796.0 709.4 L796.9 709.4 L797.8 710.2 L798.6 709.6 L799.5 709.4 L800.4 709.8 L801.2 710.7 L802.1 710.5 L803.0 710.3 L803.8 709.4 L804.7 710.2 L805.6 710.4 L806.5 709.3 L807.3 708.7 L808.2 708.6 L809.1 709.1 L809.9 708.7 L810.8 708.8 L811.7 710.3 L812.5 709.4 L813.4 709.4 L814.3 710.6 L815.2 710.3 L816.0 709.5 L816.9 709.7 L817.8 710.0 L818.6 709.4 L819.5 710.3 L820.4 713.0 L821.2 709.1 L822.1 709.9 L823.0 709.8 L823.9 709.3 L824.7 709.5 L825.6 710.5 L826.5 710.3 L827.3 709.4 L828.2 710.6 L829.1 709.1 L829.9 708.2 L830.8 708.9 L831.7 709.8 L832.6 710.4 L833.4 710.6 L834.3 709.7 L835.2 711.0 L836.1 709.5 L837.0 709.8 L837.9 709.3 L838.8 707.1 L839.7 704.3 L840.6 693.8 L841.5 658.8 L842.4 582.4 L843.3 463.1 L844.2 342.1 L845.1 289.0 L845.9 326.6 L846.8 418.1 L847.6 525.9 L848.4 614.1 L849.3 667.6 L850.1 695.9 L851.0 705.2 L851.8 709.5 L852.6 709.1 L853.5 708.8 L854.3 709.1 L855.2 708.5 L856.0 706.6 L856.9 708.2 L857.8 708.0 L858.7 708.7 L859.5 708.5 L860.4 709.0 L861.3 709.3 L862.2 707.2 L863.1 697.5 L864.0 673.6 L864.9 620.9 L865.7 531.9 L866.6 421.8 L867.5 321.0 L868.4 280.8 L869.3 329.8 L870.1 444.7 L871.0 562.8 L871.8 646.0 L872.7 689.3 L873.5 704.6 L874.4 709.5 L875.2 710.3 L876.1 710.6 L876.9 711.6 L877.8 709.8 L878.7 710.4 L879.5 710.0 L880.4 707.4 L881.3 709.0 L882.1 707.8 L883.0 709.5 L883.9 710.3 L884.8 710.4 L885.6 709.9 L886.5 709.0 L887.4 709.1 L888.2 707.6 L889.1 707.3 L890.0 709.5 L890.8 710.4 L891.7 709.3 L892.6 709.2 L893.5 708.4 L894.3 708.7 L895.2 707.1 L896.1 708.1 L896.9 708.4 L897.8 708.8 L898.7 710.8 L899.5 709.6 L900.4 710.2 L901.3 707.9 L902.2 709.5 L903.0 710.6 L903.9 709.2 L904.8 709.4 L905.6 710.2 L906.5 712.7 L907.4 709.8 L908.2 710.3 L909.1 711.1 L910.0 710.7 L910.9 712.6 L911.7 710.4 L912.6 709.8 L913.5 709.8 L914.3 709.1 L915.2 710.3 L916.1 710.5 L916.9 711.7 L917.8 712.0 L918.7 708.3 L919.6 708.1 L920.4 708.2 L921.3 709.1 L922.2 707.3 L923.0 707.9 L923.9 707.0 L924.8 708.3 L925.6 707.7 L926.5 708.9 L927.4 709.0 L928.3 709.7 L929.1 709.8 L930.0 708.6 L930.9 707.3 L931.7 709.5 L932.6 710.8 L933.5 710.7 L934.3 710.3 L935.2 709.6 L936.1 709.6 L937.0 711.7 L937.8 709.4 L938.7 709.2 L939.6 709.0 L940.4 708.7 L941.3 709.0 L942.2 710.0 L943.0 709.7 L943.9 709.8 L944.8 711.5 L945.7 709.5 L946.5 710.6 L947.4 712.3 L948.3 709.7 L949.1 710.8 L950.0 712.0 L950.9 710.7 L951.7 710.5 L952.6 708.8 L953.5 710.1 L954.4 709.2 L955.2 710.5 L956.1 708.7 L957.0 707.7 L957.8 709.4 L958.7 710.9 L959.6 709.7 L960.4 709.2 L961.3 709.3 L962.2 710.3 L963.0 710.1 L963.9 708.0 L964.7 703.5 L965.6 686.2 L966.5 645.6 L967.3 567.4 L968.2 456.6 L969.0 353.5 L969.9 310.0 L970.8 345.8 L971.7 438.5 L972.5 542.5 L973.4 625.0 L974.3 673.7 L975.2 697.0 L976.1 706.8 L976.9 709.9 L977.8 709.2 L978.7 709.3 L979.6 709.3 L980.5 710.8 L981.3 709.9 L982.2 709.9 L983.1 709.9 L983.9 710.0 L984.8 708.1 L985.7 709.3 L986.5 710.5 L987.4 710.7 L988.3 710.5 L989.2 711.0 L990.0 709.1 L990.9 710.4 L991.8 709.6 L992.6 710.2 L993.5 709.5 L994.4 710.6 L995.2 709.0 L996.1 710.3 L997.0 708.9 L997.9 708.6 L998.7 710.3 L999.6 711.7 L1000.5 709.8 L1001.3 709.1 L1002.2 711.0 L1003.1 710.3 L1003.9 708.6 L1004.8 709.8 L1005.7 709.9 L1006.6 708.4 L1007.4 709.6 L1008.3 711.7 L1009.2 707.1 L1010.0 711.1 L1010.9 710.3 L1011.8 711.9 L1012.6 711.5 L1013.5 710.2 L1014.4 710.6 L1015.3 710.2 L1016.1 710.2 L1017.0 708.8 L1017.9 710.9 L1018.7 710.4 L1019.6 709.6 L1020.5 709.4 L1021.3 710.2 L1022.2 712.0 L1023.1 709.3 L1024.0 710.0 L1024.8 711.4 L1025.7 710.7 L1026.6 710.5 L1027.4 710.0 L1028.3 712.0 L1029.2 709.0 L1030.0 709.1 L1030.9 710.8 L1031.8 709.6 L1032.7 708.4 L1033.5 711.1 L1034.4 709.2 L1035.3 709.9 L1036.1 709.6 L1037.0 709.4 L1037.9 710.3 L1038.7 712.1 L1039.6 709.5 L1040.5 710.1 L1041.4 710.1 L1042.2 711.1 L1043.1 710.9 L1044.0 710.8 L1044.8 710.2 L1045.7 708.8 L1046.6 710.3 L1047.4 710.0 L1048.3 710.6 L1049.2 709.2 L1050.0 709.6 L1050.9 709.3 L1051.8 709.6 L1052.7 709.4 L1053.5 710.5 L1054.4 709.3 L1055.3 709.9 L1056.1 709.9 L1057.0 710.9 L1057.9 710.2 L1058.7 709.9 L1059.6 711.2 L1060.5 709.9 L1061.4 709.0 L1062.2 710.1 L1063.1 711.5 L1064.0 710.2 L1064.8 710.3 L1065.7 709.7 L1066.6 709.6 L1067.4 709.9 L1068.3 709.2 L1069.2 710.9 L1070.1 710.7 L1070.9 710.9 L1071.8 710.1 L1072.7 709.7 L1073.5 710.9 L1074.4 711.4 L1075.3 708.7 L1076.1 710.0 L1077.0 710.9 L1077.9 709.7 L1078.8 710.8 L1079.6 710.9 L1080.5 710.7 L1081.4 711.0 L1082.2 709.9 L1083.1 710.9 L1084.0 709.9 L1084.8 710.7 L1085.7 711.0 L1086.6 710.9 L1087.5 710.8 L1088.3 710.1 L1089.2 710.5 L1090.1 710.2 L1090.9 709.7 L1091.8 709.9 L1092.7 710.2 L1093.5 708.8 L1094.4 708.2 L1095.3 708.9 L1096.2 709.3 L1097.0 708.5 L1097.9 708.3 L1098.8 708.4 L1099.6 709.7 L1100.5 709.9 L1101.4 709.6 L1102.2 709.5 L1103.1 710.2 L1104.0 708.7 L1104.9 710.5 L1105.7 710.5 L1106.6 709.4 L1107.5 710.3 L1108.3 709.1 L1109.2 710.1 L1110.1 709.8 L1110.9 710.5 L1111.8 709.6 L1112.7 710.2 L1113.6 709.4 L1114.4 709.4 L1115.3 709.4" fill="none" stroke="#ff3c3c" stroke-width="1.02" stroke-linejoin="round" clip-path="url(#pc)"/>
<line x1="707.5" y1="222.8" x2="707.5" y2="722" stroke="#5555ff" stroke-width="1" stroke-dasharray="1.7 2.3"/>
</g>
<text x="318.5" y="778" font-size="11" font-weight="normal" fill="#000" text-anchor="start" textLength="83" lengthAdjust="spacing" class="ui">Current value(s):</text>
<text x="426.3" y="778" font-size="11" font-weight="normal" fill="#000" text-anchor="start" textLength="516" lengthAdjust="spacing" class="ui">Scan [793], base peak 220.000, base abundance 2124800.000, peaks 379, retention time (min) 14.199567</text>
<rect x="0" y="817" width="984" height="1" fill="#808080" />
<rect x="0" y="817" width="1" height="14" fill="#808080" />
<rect x="1" y="830" width="983" height="1" fill="#fff" />
<rect x="983" y="818" width="1" height="13" fill="#fff" />
<rect x="984" y="817" width="44" height="1" fill="#808080" />
<rect x="984" y="817" width="1" height="14" fill="#808080" />
<rect x="985" y="830" width="43" height="1" fill="#fff" />
<rect x="1027" y="818" width="1" height="13" fill="#fff" />
<rect x="1029" y="817" width="123" height="1" fill="#808080" />
<rect x="1029" y="817" width="1" height="14" fill="#808080" />
<rect x="1030" y="830" width="122" height="1" fill="#fff" />
<rect x="1151" y="818" width="1" height="13" fill="#fff" />
<text x="11.5" y="828" font-size="11" font-weight="normal" fill="#000" text-anchor="start" textLength="327.5" lengthAdjust="spacing" class="ui">mix Tetra-CBs, 500 pg/ul [C:\MSDchem\1\DATA\tetraCB.D\Data.ms]</text>
<text x="990" y="828" font-size="11" font-weight="normal" fill="#000" text-anchor="start" textLength="21.5" lengthAdjust="spacing" class="ui">0 / 0</text>
<text x="1031.3" y="828" font-size="11" font-weight="normal" fill="#000" text-anchor="start" textLength="88.3" lengthAdjust="spacing" class="ui">6 MByte / 9 MByte</text>
</svg>
</body></html>
